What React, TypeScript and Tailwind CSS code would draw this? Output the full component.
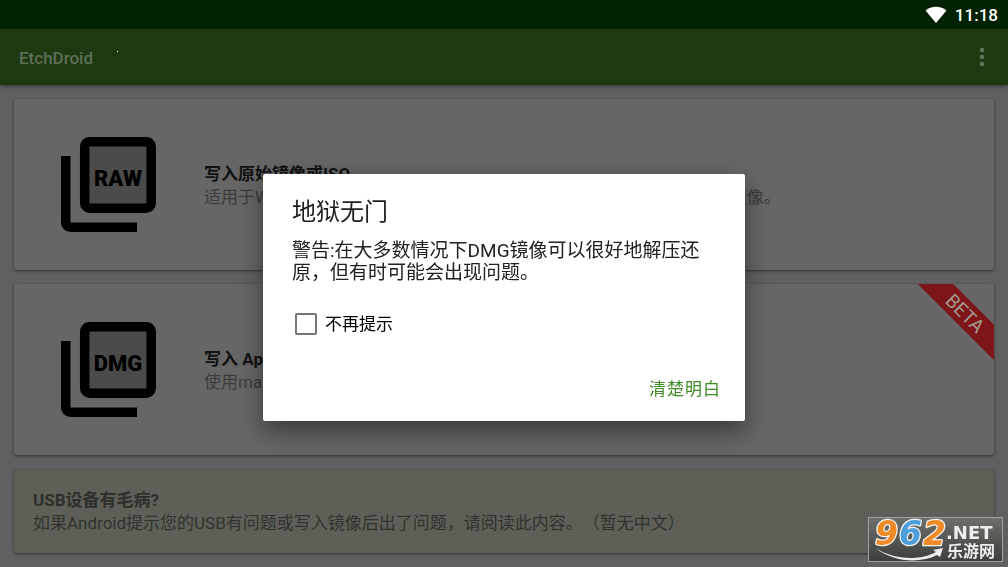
import { type ReactNode } from 'react';

const FileIcon = ({ label }: { label: string }) => (
  <svg viewBox="0 0 95 95" className="h-[95px] w-[95px] shrink-0" role="img" aria-label={label}>
    <path d="M0 19h9.500v66.500H76V95H9.500A9.500 9.500 0 0 1 0 85.500z" fill="#000" />
    <rect x="23.700" y="4.700" width="66.500" height="66.500" rx="5" fill="#4b4b4b" stroke="#000" strokeWidth="9.500" />
    <text
      x="57"
      y="49"
      textAnchor="middle"
      fill="#000"
      className="font-['Roboto',sans-serif] text-[22px] font-black"
    >
      {label}
    </text>
  </svg>
);

const Card = ({ icon, title, text, badge }: { icon: string; title: string; text: string; badge?: ReactNode }) => (
  <section className="relative flex h-[171px] items-center gap-12 overflow-hidden rounded-[3px] bg-[#666666] pl-[47px] shadow-[0_1px_3px_rgba(0,0,0,0.5)]">
    <FileIcon label={icon} />
    <div className="pt-[3px] text-[17px] leading-[23px]">
      <h2 className="font-bold text-[#111111]">{title}</h2>
      <p className="text-[#3b3b3b]">{text}</p>
    </div>
    {badge}
  </section>
);

const Watermark = () => (
  <svg viewBox="0 0 135 45" className="fixed right-[5px] bottom-[5px] h-[45px] w-[135px] overflow-visible">
    <defs>
      <linearGradient id="plate" x1="0" y1="0" x2="0" y2="1">
        <stop offset="0" stopColor="#6e706c" />
        <stop offset="1" stopColor="#3c3e3b" />
      </linearGradient>
    </defs>
    <rect x="0.500" y="0.500" width="134" height="44" fill="url(#plate)" stroke="#a2a3a0" />
    <g
      className="font-['DejaVu_Sans',sans-serif] text-[33px] font-bold italic"
      stroke="#f4f4f4"
      strokeWidth="2.500"
      paintOrder="stroke"
      strokeLinejoin="round"
    >
      <text x="7" y="28" fill="#f08a24">9</text>
      <text x="31" y="28" fill="#4d9fdc">6</text>
      <text x="55" y="28" fill="#f08a24">2</text>
    </g>
    <path d="M8 31c17 12 44 13 60 4l-3-2 10-2-3 9-3-2C52 47 24 45 8 31z" fill="#ededed" />
    <text x="78" y="22" fill="#ededed" className="font-['DejaVu_Sans',sans-serif] text-[18px] font-bold">.NET</text>
    <text x="79" y="40" fill="#ededed" className="font-['Noto_Sans_CJK_SC',sans-serif] text-[16px] font-bold">乐游网</text>
  </svg>
);

export default function App() {
  return (
    <div className="min-h-screen bg-[#606060] font-['Roboto','Noto_Sans_CJK_SC',sans-serif]">
      <div className="flex h-[29px] items-center justify-end gap-2 bg-[#002200] pr-[10px] text-white">
        <svg viewBox="0 0 22 17" className="h-[17px] w-[22px]">
          <path d="M0.500 4.500C6.500-.5 15.500-.5 21.500 4.500L11 17z" fill="#fff" />
        </svg>
        <span className="pt-[2px] text-[17px] font-medium">11:18</span>
      </div>
      <header className="flex h-14 items-center gap-6 bg-[#1e3810] pr-4 pl-[19px] shadow-[0_1px_4px_rgba(0,0,0,0.5)]">
        <h1 className="pt-[3px] text-[17px] font-medium text-[#5d6f57]">EtchDroid</h1>
        <span className="mb-3 h-px w-px bg-white" />
        <button aria-label="Menu" className="ml-auto flex w-5 justify-center">
          <svg viewBox="0 0 4 20" className="h-5 w-1 overflow-visible" fill="#637359">
            <circle cx="2" cy="3" r="2.300" />
            <circle cx="2" cy="10" r="2.300" />
            <circle cx="2" cy="17" r="2.300" />
          </svg>
        </button>
      </header>

      <main className="flex flex-col gap-[14px] p-[14px]">
        <Card
          icon="RAW"
          title="写入原始镜像或ISO"
          text="适用于Windows以外的大部分GNU/Linux发行版镜像以及树莓派等磁盘镜像。"
        />
        <Card
          icon="DMG"
          title="写入 Apple DMG 镜像"
          text="使用macOS磁盘镜像"
          badge={
            <span className="absolute top-[17px] -right-[31px] w-[120px] rotate-45 bg-[#7d1519] text-center text-[19px] leading-[25px] text-[#a39a8c]">
              BETA
            </span>
          }
        />
        <section className="mt-px h-[83px] rounded-[3px] bg-[#5e6058] px-[19px] pt-[19px] text-[17px] leading-[23px] shadow-[0_1px_3px_rgba(0,0,0,0.5)]">
          <h2 className="font-bold text-[#2d302b]">USB设备有毛病?</h2>
          <p className="text-[#30332e] [text-spacing-trim:space-all]">
            如果Android提示您的USB有问题或写入镜像后出了问题，请阅读此内容。（暂无中文）
          </p>
        </section>
      </main>

      <Watermark />

      <div className="fixed inset-0 flex items-center justify-center pt-7">
        <div
          role="dialog"
          aria-labelledby="dialog-title"
          className="w-[482px] rounded-[2px] bg-white px-[29px] pt-5 pb-[13px] text-[#212121] shadow-[0_10px_24px_rgba(0,0,0,0.45)]"
        >
          <h2 id="dialog-title" className="text-2xl leading-9">地狱无门</h2>
          <p className="mt-[10px] text-[19px] leading-[22px]">
            警告:在大多数情况下DMG镜像可以很好地解压还原，但有时可能会出现问题。
          </p>
          <label className="mt-7 flex items-center gap-2 pl-[3px] text-[17px] leading-6 text-black">
            <input
              type="checkbox"
              className="h-[22px] w-[22px] appearance-none rounded-[2px] border-2 border-[#757575] checked:bg-[#43892b]"
            />
            不再提示
          </label>
          <div className="mt-9 flex justify-end">
            <button className="-mr-[5px] h-9 text-[17px] tracking-[1px] text-[#3f8a27]">清楚明白</button>
          </div>
        </div>
      </div>
    </div>
  );
}
